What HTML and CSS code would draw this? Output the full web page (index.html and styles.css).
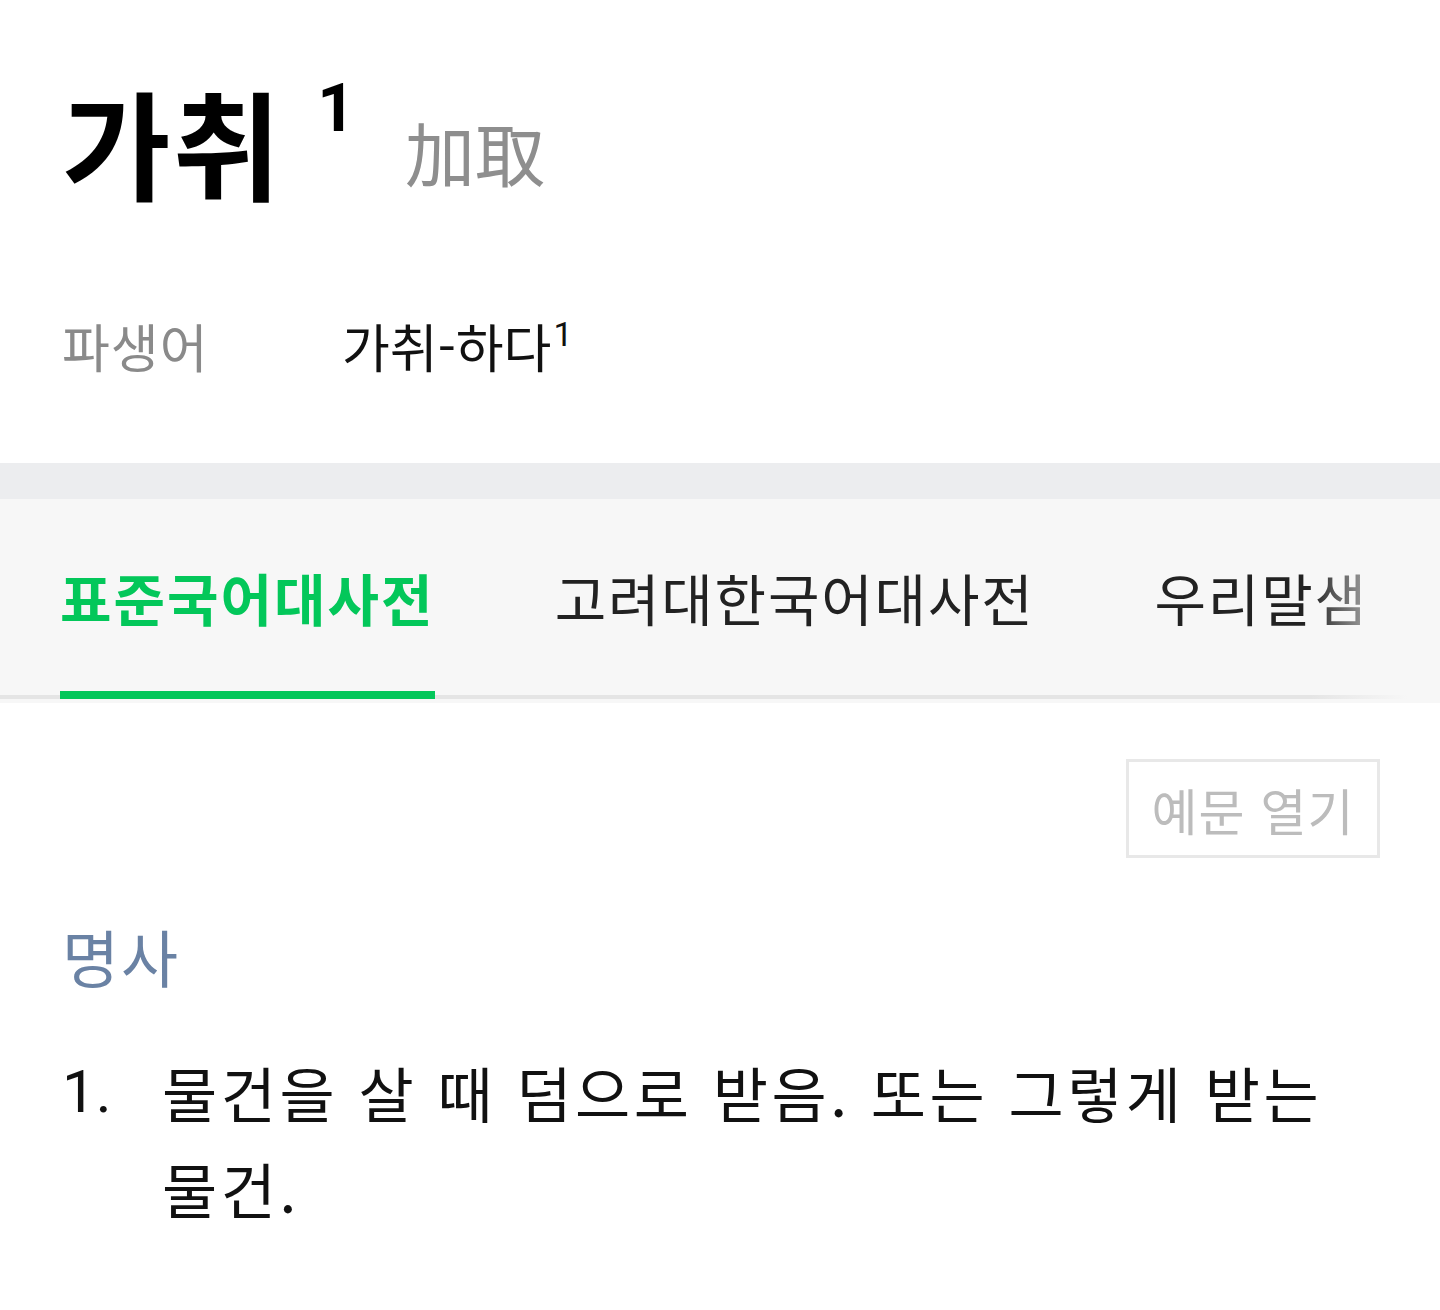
FILE: index.html
```html
<!DOCTYPE html>
<html lang="ko">
<head>
    <meta charset="utf-8"/>
    <title>가취 - 사전</title>
    <link rel="stylesheet" href="styles.css">
</head>
<body>
<div class="entry">
    <div class="headword">
        <strong class="word">가취</strong><sup class="homonym">1</sup>
        <span class="hanja">加取</span>
    </div>
    <div class="derive">
        <span class="label">파생어</span>
        <a class="derive_word">가취-하다<sup>1</sup></a>
    </div>
</div>

<div class="divider"></div>

<div class="tabs">
    <ul class="tab_list">
        <li class="tab on">표준국어대사전</li>
        <li class="tab">고려대한국어대사전</li>
        <li class="tab">우리말샘</li>
    </ul>
    <span class="tab_fade"></span>
</div>

<div class="content">
    <div class="tools">
        <button class="btn_example" type="button">예문 열기</button>
    </div>
    <p class="pos">명사</p>
    <ol class="means">
        <li><span class="num">1.</span><span class="txt">물건을 살 때 덤으로 받음. 또는 그렇게 받는 물건.</span></li>
    </ol>
</div>
</body>
</html>
```

FILE: styles.css
```css
* { margin: 0; padding: 0; box-sizing: border-box; }
body {
    width: 1440px;
    background: #fff;
    color: #111;
    font-family: "Noto Sans CJK KR", "Noto Sans", sans-serif;
    overflow: hidden;
}
ul, ol { list-style: none; }

.entry {
    padding: 66px 62px 0;
    height: 463px;
}
.headword {
    display: flex;
    align-items: flex-start;
    height: 156px;
}
.word {
    font-size: 118px;
    font-weight: 700;
    line-height: 150px;
    letter-spacing: 2px;
    color: #000;
}
.homonym {
    font-size: 66px;
    font-weight: 700;
    line-height: 80px;
    margin-top: 3px;
    margin-left: 34px;
    color: #000;
    font-family: "Roboto", "Noto Sans", sans-serif;
}
.hanja {
    font-size: 70px;
    line-height: 150px;
    margin-top: 11px;
    margin-left: 50px;
    color: #8e8e8e;
    letter-spacing: 0;
}

.derive {
    display: flex;
    align-items: baseline;
    margin-top: 86px;
    height: 90px;
}
.derive .label {
    width: 280px;
    font-size: 52px;
    color: #8a8a8a;
    letter-spacing: 1px;
}
.derive_word {
    font-size: 52px;
    color: #111;
    letter-spacing: 0;
}
.derive_word sup {
    font-size: 34px;
    vertical-align: 22px;
    margin-left: 2px;
    font-family: "Roboto", "Noto Sans", sans-serif;
}

.divider {
    height: 36px;
    background: #ecedef;
}

.tabs {
    position: relative;
    height: 204px;
    background: #f7f7f7;
    padding-bottom: 4px;
}
.tab_list {
    display: flex;
    height: 200px;
    padding-left: 60px;
    border-bottom: 4px solid #e5e5e5;
}
.tab {
    height: 200px;
    line-height: 196px;
    font-size: 56px;
    letter-spacing: 1.8px;
    color: #222;
    margin-right: 120px;
    white-space: nowrap;
}
.tab.on {
    color: #03c75a;
    font-weight: 700;
    letter-spacing: 2px;
    border-bottom: 8px solid #03c75a;
}
.tab_fade {
    position: absolute;
    top: 0;
    right: 0;
    width: 130px;
    height: 204px;
    background: linear-gradient(to right, rgba(247,247,247,0), #f7f7f7 75%);
}

.content {
    padding: 56px 60px 0 62px;
}
.tools {
    display: flex;
    justify-content: flex-end;
}
.btn_example {
    width: 254px;
    height: 99px;
    border: 3px solid #e8e8e8;
    background: #fff;
    font-family: inherit;
    font-size: 50px;
    color: #bcbcbc;
    letter-spacing: 1px;
}
.pos {
    margin-top: 58px;
    font-size: 62px;
    line-height: 80px;
    color: #6a82a4;
    letter-spacing: 2px;
}
.means {
    margin-top: 48px;
}
.means li {
    display: flex;
    font-size: 60px;
    line-height: 96px;
    color: #111;
}
.means .num {
    width: 100px;
    flex: none;
    font-family: "Roboto", "Noto Sans", sans-serif;
}
.means .txt {
    width: 1200px;
    letter-spacing: 3.5px;
}
```
